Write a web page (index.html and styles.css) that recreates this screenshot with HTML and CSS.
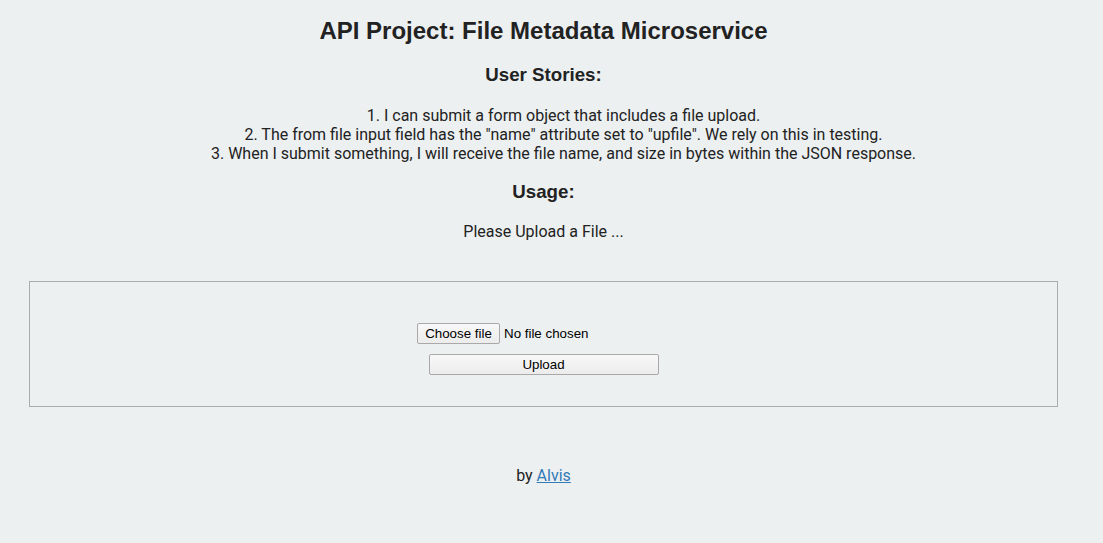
FILE: index.html
```html
<!DOCTYPE html>
<html>
<head>
<meta charset="utf-8">
<title>File Metadata Microservice</title>
<link rel="stylesheet" href="styles.css">
</head>
<body>
<div class="page">
  <h1 class="title">API Project: File Metadata Microservice</h1>
  <h3 class="subtitle">User Stories:</h3>
  <ol class="stories">
    <li>1. I can submit a form object that includes a file upload.</li>
    <li>2. The from file input field has the "name" attribute set to "upfile". We rely on this in testing.</li>
    <li>3. When I submit something, I will receive the file name, and size in bytes within the JSON response.</li>
  </ol>
  <h3 class="subtitle usage">Usage:</h3>
  <p class="prompt">Please Upload a File ...</p>
  <div class="view">
    <form class="upload-form" enctype="multipart/form-data" method="POST" action="#">
      <label class="file-field">
        <input class="file-input" type="file" name="upfile">
        <span class="choose-btn">Choose file</span>
        <span class="file-status">No file chosen</span>
      </label>
      <input class="upload-btn" type="submit" value="Upload">
    </form>
  </div>
  <p class="footer">by <a href="#">Alvis</a></p>
</div>
</body>
</html>
```
FILE: styles.css
```css
html, body {
  margin: 0;
  padding: 0;
  background: #ecf0f1;
}
body {
  font-family: Roboto, "Liberation Sans", sans-serif;
  font-size: 16px;
  color: #222;
}
.page {
  width: 1087px;
  text-align: center;
  padding-top: 17px;
}
.title {
  font-family: "Liberation Sans", Arial, sans-serif;
  font-size: 24px;
  font-weight: bold;
  margin: 0;
  line-height: 28px;
  color: #222;
}
.subtitle {
  font-family: "Liberation Sans", Arial, sans-serif;
  font-size: 18.72px;
  font-weight: bold;
  margin: 19px 0 0;
  line-height: 22px;
}
.usage {
  margin-top: 18px;
}
.stories {
  list-style: none;
  padding: 0 0 0 40px;
  margin: 20px 0 0;
  line-height: 19px;
}
.prompt {
  margin: 19px 0 0;
  line-height: 19px;
}
.view {
  margin: 40px 29px 0;
  border: 1px solid #a9acad;
  height: 124px;
  box-sizing: content-box;
}
.upload-form {
  display: flex;
  flex-direction: column;
  align-items: center;
  padding-top: 41px;
  gap: 10px;
}
.file-field {
  display: flex;
  align-items: center;
  width: 253px;
  font-family: "Liberation Sans", Arial, sans-serif;
  font-size: 13.33px;
  color: #000;
  cursor: pointer;
}
.file-input {
  display: none;
}
.choose-btn {
  box-sizing: border-box;
  width: 83px;
  height: 21px;
  line-height: 19px;
  border: 1px solid #a9a9a9;
  border-radius: 2px;
  background: linear-gradient(#f8f8f8, #ececec);
  text-align: center;
}
.file-status {
  margin-left: 4px;
}
.upload-btn {
  box-sizing: border-box;
  font-family: "Liberation Sans", Arial, sans-serif;
  font-size: 13.33px;
  color: #000;
  width: 230px;
  height: 21px;
  padding: 0;
  border: 1px solid #a9a9a9;
  border-radius: 2px;
  background: linear-gradient(#f8f8f8, #ececec);
}
.footer {
  margin: 59px 0 0;
  line-height: 19px;
}
.footer a {
  color: #337ab7;
}
```
